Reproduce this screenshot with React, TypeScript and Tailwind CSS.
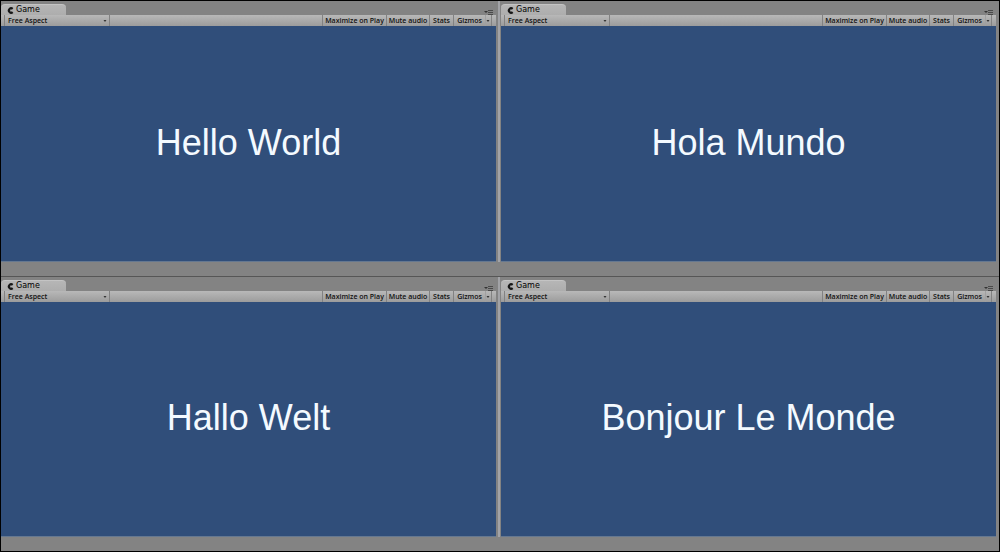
import React from 'react';

interface GameViewProps {
  message: string;
  side: 'left' | 'right';
  divided?: boolean;
}

const GameView: React.FC<GameViewProps> = ({ message, side, divided = false }) => {
  const frame =
    side === 'left'
      ? 'border-r-2 border-[#a2a3a7] pr-0.5'
      : 'border-r-2 border-[#838383] pl-px pr-px';

  return (
    <section className={`flex flex-col min-h-0 bg-[#838383] ${divided ? 'border-t border-[#565656]' : ''}`}>
      <div className={`flex flex-1 flex-col min-h-0 ${frame}`}>
        {/* Tab strip */}
        <div className="flex items-end justify-between h-3.5 pt-[3px]">
          <button className="flex items-center gap-0.5 h-full w-[65px] pl-1.5 rounded-t-sm border-t border-[#c4c4c4] bg-linear-to-b from-[#b6b6b6] to-[#adadad] text-[8px] leading-none text-black">
            <svg className="size-[7px]" viewBox="0 0 7 7" aria-hidden="true">
              <path d="M6.4 1.1A3.3 3.3 0 1 0 6.4 5.9L5.2 4.5H3.2V2.5H5.2Z" fill="#161616" />
            </svg>
            Game
          </button>
          <button aria-label="Panel options" className="mr-0.5">
            <svg className="w-2.5 h-1.5" viewBox="0 0 10 6" aria-hidden="true">
              <path d="M0 2H4L2 4Z" fill="#333333" />
              <path d="M4 1.5H9M4 3.5H9M4 5.5H9" stroke="#4a4a4a" strokeWidth="1" />
            </svg>
          </button>
        </div>

        {/* Toolbar */}
        <div className="flex items-stretch h-[11px] pl-[3px] pr-1 bg-linear-to-b from-[#b8b8b8] to-[#9c9c9c] font-['Open_Sans',sans-serif] text-[7px] font-semibold leading-[10px] text-[#101010]">
          <button className="flex items-center justify-between w-[106px] pl-[3px] pr-0.5 border-x border-[#828282]">
            Free Aspect
            <Arrow />
          </button>
          <div className="flex items-stretch ml-auto border-r border-[#828282]">
            <button className="w-16 border-l border-[#828282] whitespace-nowrap">Maximize on Play</button>
            <button className="w-[43px] border-l border-[#828282] whitespace-nowrap">Mute audio</button>
            <button className="w-6 border-l border-[#828282]">Stats</button>
            <button className="w-8 border-l border-[#828282]">Gizmos</button>
            <button aria-label="Gizmos menu" className="flex items-center w-1.5 border-l border-[#a0a0a0]">
              <Arrow />
            </button>
          </div>
        </div>

        <div className="flex flex-1 items-center justify-center pb-0.5 border-b border-[#657891] bg-[#304e7a]">
          <p className="font-['Liberation_Sans',Arial,sans-serif] text-4xl leading-none text-[#f4faff] whitespace-nowrap">
            {message}
          </p>
        </div>
      </div>
      <div className="h-3.5 bg-[#838383]"></div>
    </section>
  );
};

const Arrow: React.FC = () => (
  <svg className="w-1 h-1" viewBox="0 0 4 4" aria-hidden="true">
    <path d="M0.5 1H3.5L2 3Z" fill="#333333" />
  </svg>
);

export default function App() {
  return (
    <main className="grid grid-cols-2 grid-rows-2 h-screen border border-black bg-[#838383] font-['DejaVu_Sans',Verdana,sans-serif]">
      <GameView side="left" message="Hello World" />
      <GameView side="right" message="Hola Mundo" />
      <GameView side="left" message="Hallo Welt" divided />
      <GameView side="right" message="Bonjour Le Monde" divided />
    </main>
  );
}
